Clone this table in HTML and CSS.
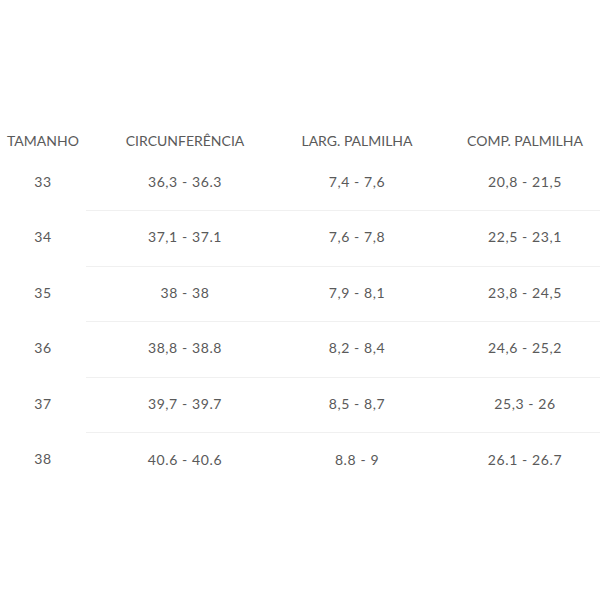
FILE: index.html
```html
<!DOCTYPE html>
<html lang="pt">
<head>
<meta charset="utf-8">
<link rel="stylesheet" href="styles.css">
</head>
<body>
<div class="wrap">
<table class="sizes">
<colgroup><col class="c1"><col class="c2"><col class="c3"><col class="c4"></colgroup>
<thead>
<tr><th>TAMANHO</th><th>CIRCUNFERÊNCIA</th><th>LARG. PALMILHA</th><th>COMP. PALMILHA</th></tr>
</thead>
<tbody>
<tr><td>33</td><td>36,3 - 36.3</td><td>7,4 - 7,6</td><td>20,8 - 21,5</td></tr>
<tr><td>34</td><td>37,1 - 37.1</td><td>7,6 - 7,8</td><td>22,5 - 23,1</td></tr>
<tr><td>35</td><td>38 - 38</td><td>7,9 - 8,1</td><td>23,8 - 24,5</td></tr>
<tr><td>36</td><td>38,8 - 38.8</td><td>8,2 - 8,4</td><td>24,6 - 25,2</td></tr>
<tr><td>37</td><td>39,7 - 39.7</td><td>8,5 - 8,7</td><td>25,3 - 26</td></tr>
<tr><td>38</td><td>40.6 - 40.6</td><td>8.8 - 9</td><td>26.1 - 26.7</td></tr>
</tbody>
</table>
</div>
</body>
</html>
```
FILE: styles.css
```css
html, body {
  margin: 0;
  padding: 0;
  background: #fff;
  overflow: hidden;
}
.wrap {
  padding-top: 127px;
  width: 600px;
  overflow: hidden;
}
.sizes {
  width: 620px;
  table-layout: fixed;
  border-collapse: collapse;
  font-family: Lato, "Open Sans", sans-serif;
  font-size: 14px;
  color: #5a5a5a;
}
.c1 { width: 86px; }
.c2 { width: 198px; }
.c3 { width: 146px; }
.c4 { width: 190px; }
.sizes th {
  font-weight: 400;
  height: 28px;
  padding: 0 0 2px;
  box-sizing: border-box;
  text-align: center;
}
.sizes td {
  height: 55.5px;
  padding: 0 0 3px;
  text-align: center;
  box-sizing: border-box;
  letter-spacing: 0.6px;
}
.sizes tbody tr td:not(:first-child) {
  border-bottom: 1px solid #f0f0f0;
}
.sizes tbody tr:last-child td {
  border-bottom: none;
}
```
